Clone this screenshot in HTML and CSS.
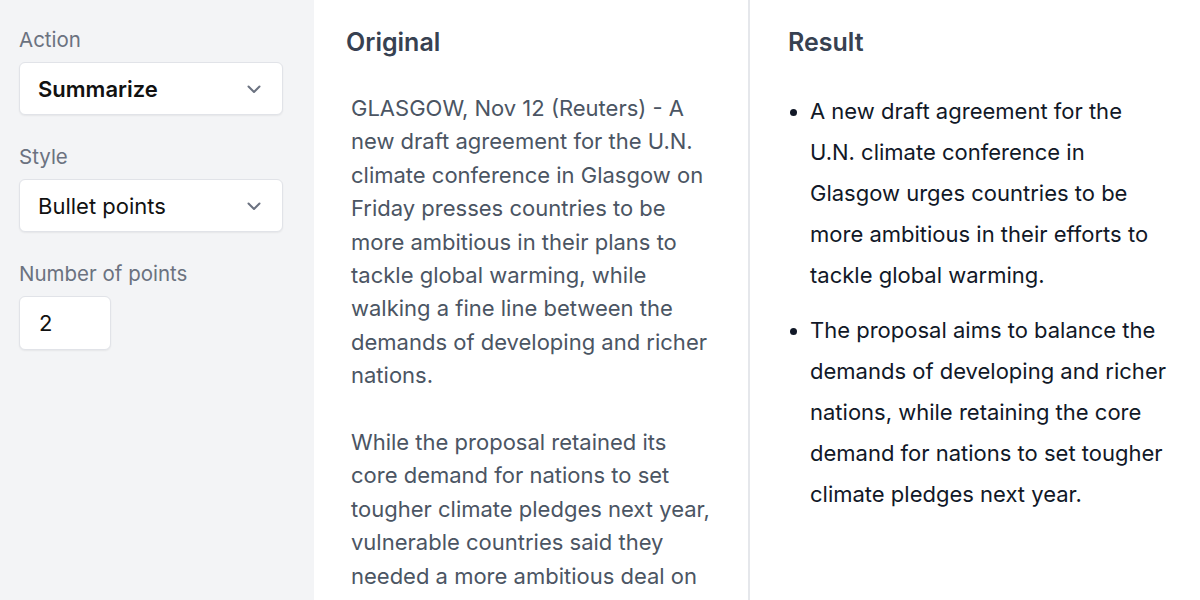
FILE: index.html
```html
<!DOCTYPE html>
<html>
<head>
<meta charset="utf-8">
<link rel="stylesheet" href="styles.css">
</head>
<body>
<div class="app">
  <aside class="sidebar">
    <div class="field">
      <label class="label">Action</label>
      <div class="select bold"><span>Summarize</span>
        <svg class="chev" width="20" height="20" viewBox="0 0 20 20"><path d="M4.5 7.5l5.5 5.5 5.5-5.5" fill="none" stroke="#6b7280" stroke-width="2" stroke-linecap="round" stroke-linejoin="round"/></svg>
      </div>
    </div>
    <div class="field">
      <label class="label">Style</label>
      <div class="select"><span>Bullet points</span>
        <svg class="chev" width="20" height="20" viewBox="0 0 20 20"><path d="M4.5 7.5l5.5 5.5 5.5-5.5" fill="none" stroke="#6b7280" stroke-width="2" stroke-linecap="round" stroke-linejoin="round"/></svg>
      </div>
    </div>
    <div class="field">
      <label class="label">Number of points</label>
      <div class="input">2</div>
    </div>
  </aside>
  <section class="panel original">
    <h2 class="title">Original</h2>
    <div class="text">
      <p>GLASGOW, Nov 12 (Reuters) - A new draft agreement for the U.N. climate conference in Glasgow on Friday presses countries to be more ambitious in their plans to tackle global warming, while walking a fine line between the demands of developing and richer nations.</p>
      <p>While the proposal retained its core demand for nations to set tougher climate pledges next year, vulnerable countries said they needed a more ambitious deal on</p>
    </div>
  </section>
  <section class="panel result">
    <h2 class="title">Result</h2>
    <ul class="bullets">
      <li>A new draft agreement for the U.N. climate conference in Glasgow urges countries to be more ambitious in their efforts to tackle global warming.</li>
      <li>The proposal aims to balance the demands of developing and richer nations, while retaining the core demand for nations to set tougher climate pledges next year.</li>
    </ul>
  </section>
</div>
</body>
</html>
```
FILE: styles.css
```css
* { box-sizing: border-box; }
html, body { margin: 0; padding: 0; }
body {
  font-family: Inter, "Noto Sans", sans-serif;
  background: #fff;
  width: 1200px;
  height: 600px;
  overflow: hidden;
}
.app {
  display: flex;
  height: 600px;
}
.sidebar {
  width: 314px;
  flex: none;
  background: #f3f4f6;
  padding: 26px 31px 0 19px;
  display: flex;
  flex-direction: column;
  gap: 28px;
}
.field {
  display: flex;
  flex-direction: column;
  gap: 8px;
}
.label {
  font-size: 20.5px;
  color: #6b7280;
  line-height: 28px;
}
.select, .input {
  background: #fff;
  border: 1px solid #e1e3e8;
  border-radius: 6px;
  box-shadow: 0 1px 2px rgba(0,0,0,0.06);
  height: 53px;
  display: flex;
  align-items: center;
  padding: 0 18px 0 18px;
  font-size: 22px;
  color: #111;
}
.select { justify-content: space-between; width: 264px; }
.select.bold { font-weight: 600; }
.input { width: 92px; height: 54px; padding-left: 19px; }
.chev { flex: none; }
.panel {
  background: #fff;
  height: 600px;
}
.original {
  width: 436px;
  flex: none;
  border-right: 2px solid #e5e7eb;
  padding: 26px 0 0 32px;
}
.result {
  flex: 1;
  padding: 26px 0 0 38px;
}
.title {
  margin: 0;
  font-size: 25px;
  font-weight: 600;
  color: #374151;
  line-height: 32px;
}
.text {
  margin-top: 34px;
  padding-left: 5px;
  width: 367px;
  font-size: 22px;
  line-height: 33.4px;
  color: #4b5563;
}
.text p { margin: 0 0 33.4px 0; }
.bullets {
  margin: 33px 0 0 0;
  padding: 0 0 0 22px;
  width: 384px;
  font-size: 22px;
  line-height: 41px;
  color: #111827;
}
.bullets li { margin-bottom: 14px; padding-left: 0; }
.bullets li::marker { font-size: 21px; }
```
